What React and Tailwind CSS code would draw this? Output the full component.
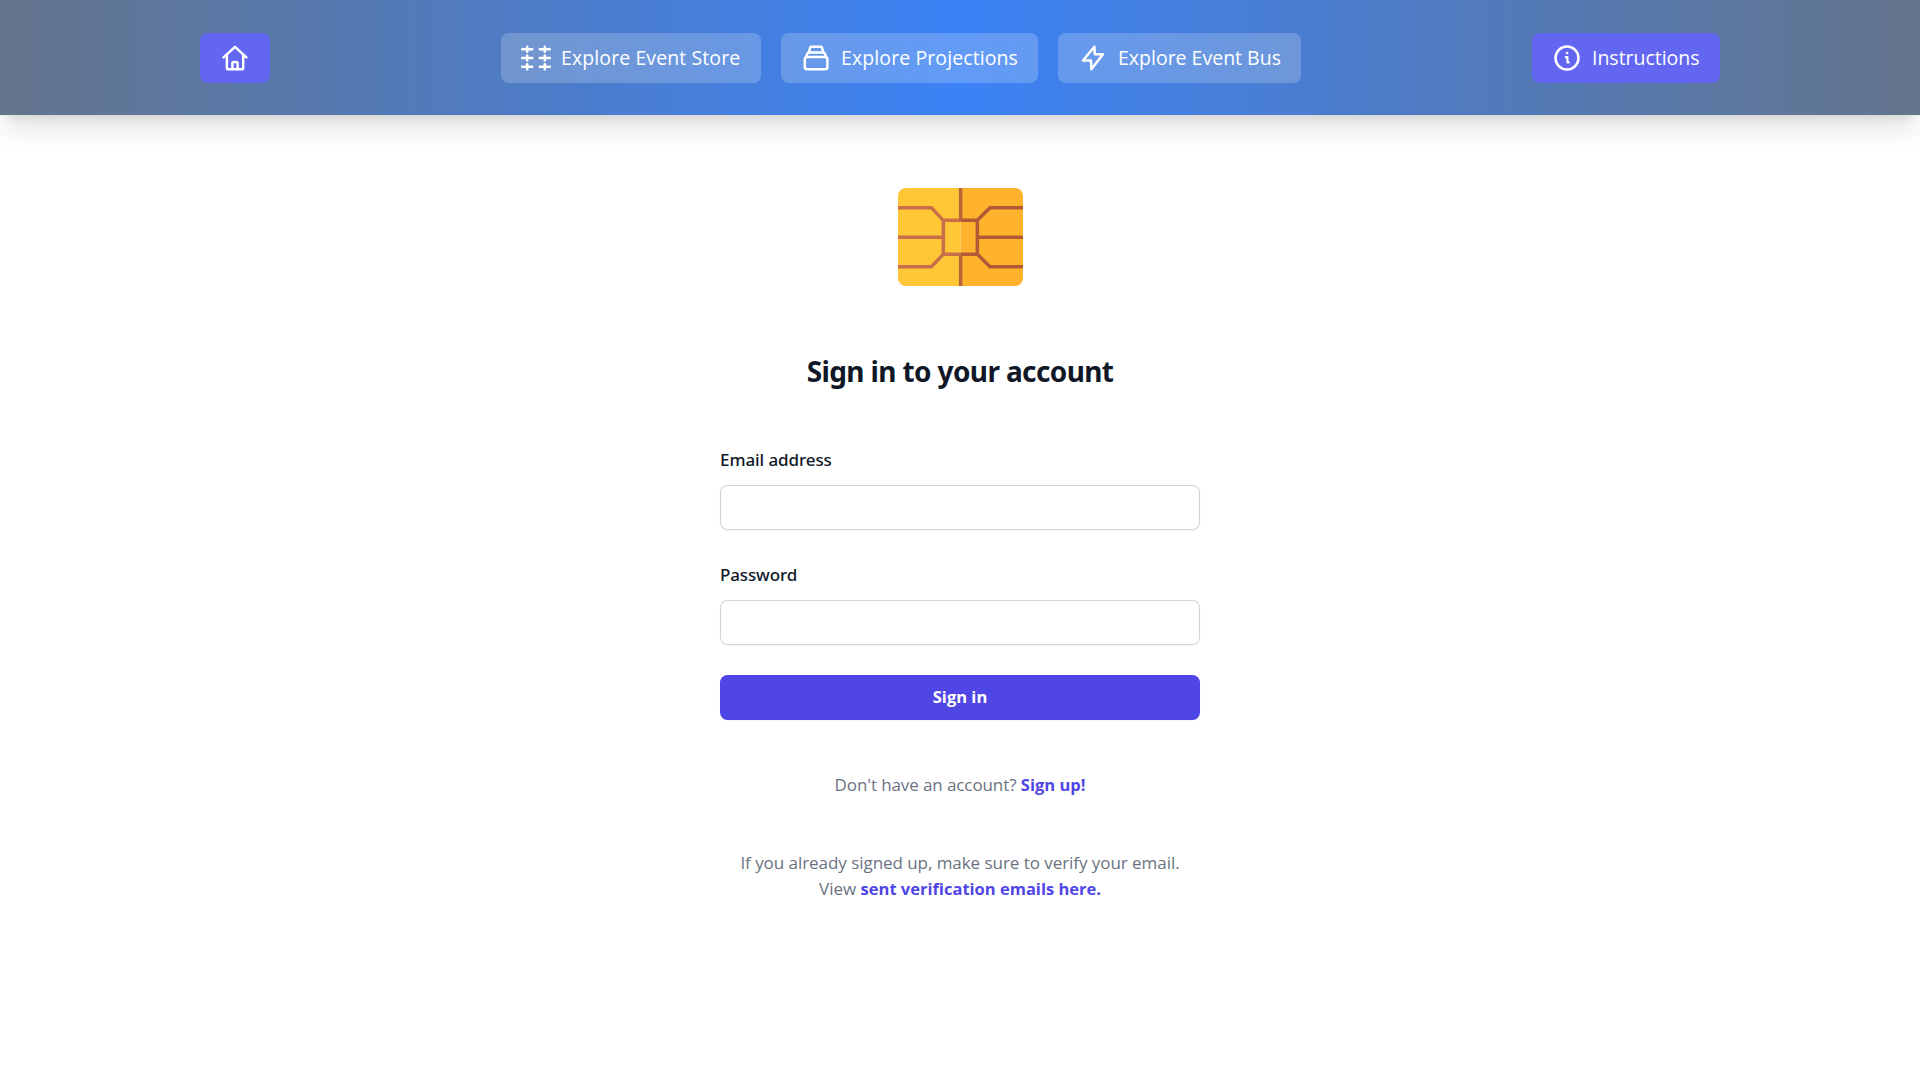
function Icon({ children }) {
  return (
    <svg viewBox="0 0 30 30" className="size-[30px] shrink-0" fill="none" stroke="currentColor" strokeWidth="2.5" strokeLinecap="round" strokeLinejoin="round">
      {children}
    </svg>
  );
}

function HomeIcon() {
  return (
    <Icon>
      <path d="M3.6 14.4 15 3.8l11.4 10.6M6.9 12v12.7c0 .9.6 1.6 1.5 1.6h13.2c.9 0 1.6-.7 1.6-1.6V12" />
      <path d="M12.4 26v-5.8c0-.8.5-1.3 1.3-1.3h2.6c.8 0 1.3.5 1.3 1.3V26" />
    </Icon>
  );
}

function StoreIcon() {
  return (
    <Icon>
      <path d="M1.2 6.3h10M1.2 15h10M1.2 23.7h10M18.8 6.3h10M18.8 15h10M18.8 23.7h10" />
      <path d="M6.2 3.8v5M6.2 12.5v5M6.2 21.2v5M23.8 3.8v5M23.8 12.5v5M23.8 21.2v5" />
    </Icon>
  );
}

function StackIcon() {
  return (
    <Icon>
      <rect x="3.8" y="13.9" width="22.6" height="12.4" rx="2.3" />
      <path d="M5.2 14 6.3 10.7c.2-.9.7-1.3 1.5-1.3h14.6c.8 0 1.3.4 1.5 1.3l1.1 3.3" />
      <path d="M8.1 9.3 9 4.9c.2-.8.6-1.1 1.3-1.1h9.5c.7 0 1.1.3 1.3 1.1l1 4.4" />
    </Icon>
  );
}

function BoltIcon() {
  return (
    <Icon>
      <path d="M16.4 3.8 5 17.5h8l.4 8.8L25 11.3h-8.2z" />
    </Icon>
  );
}

function InfoIcon() {
  return (
    <Icon>
      <circle cx="15" cy="15" r="11.5" />
      <path d="M13.7 14.100h1.700v5.200h1.400" strokeWidth="2.2" />
      <circle cx="15.100" cy="10" r="1.300" fill="currentColor" stroke="none" />
    </Icon>
  );
}

function NavButton({ icon, label, className }) {
  return (
    <a href="#" className={"flex h-[50px] items-center gap-2.5 rounded-[7.5px] px-5 text-[19.5px] whitespace-nowrap text-white " + className}>
      {icon}
      {label && <span>{label}</span>}
    </a>
  );
}

function ChipLogo() {
  return (
    <svg viewBox="54 55 375 294" className="h-[98px] w-[125px] rounded-[8px]" fill="none" strokeWidth="10.5">
      <path d="M54 55h188v294H54z" fill="#ffc636" />
      <path d="M242 55h187v294H242z" fill="#ffb32c" />
      <path d="M54 114h100l36 38h52M190 152v102h52M54 202.500h136M54 291h100l36-37" stroke="#c86f4a" />
      <path d="M429 114H330l-38 38h-50M292 152v102h-50M429 202.500H292M429 291H330l-38-37" stroke="#b25a36" />
      <path d="M242 55v97M242 254v95" stroke="#ba6539" />
    </svg>
  );
}

function Field({ id, label, type, className }) {
  return (
    <div>
      <label htmlFor={id} className={"block h-[30px] font-['Noto_Sans'] text-[17px] leading-[29px] font-medium text-gray-900 " + className}>
        {label}
      </label>
      <input id={id} type={type} className="mt-2.5 block h-[45px] w-full rounded-[7.5px] bg-white px-3 shadow-xs ring-1 ring-[#d1d5db] ring-inset outline-none" />
    </div>
  );
}

export default function App() {
  return (
    <div className="min-h-screen bg-white font-['Open_Sans',sans-serif] text-[17px]">
      <header className="h-[115px] bg-[linear-gradient(to_right,#64748b,#3b82f6,#64748b)] shadow-xl">
        <div className="mx-auto grid h-full w-[1520px] grid-cols-[301px_1fr_188px] items-center">
          <NavButton icon={<HomeIcon />} className="w-[70px] bg-[#6366f1]" />
          <nav className="flex gap-5">
            <NavButton icon={<StoreIcon />} label="Explore Event Store" className="w-[260px] bg-white/20 tracking-[0.1px]" />
            <NavButton icon={<StackIcon />} label="Explore Projections" className="w-[257px] bg-white/20 tracking-[0.1px]" />
            <NavButton icon={<BoltIcon />} label="Explore Event Bus" className="w-[243px] bg-white/20" />
          </nav>
          <NavButton icon={<InfoIcon />} label="Instructions" className="w-[188px] bg-[#6366f1] tracking-[-0.02px]" />
        </div>
      </header>

      <main className="mx-auto flex w-[480px] flex-col pt-[73px]">
        <div className="flex justify-center">
          <ChipLogo />
        </div>
        <h2 className="mt-[63px] text-center font-['Noto_Sans'] text-[28px] leading-[44px] font-bold tracking-[-0.62px] whitespace-nowrap text-gray-900">
          Sign in to your account
        </h2>
        <form className="mt-[51.500px] flex flex-col gap-[30px]" onSubmit={(e) => e.preventDefault()}>
          <Field id="email" label="Email address" type="email" className="tracking-[-0.08px]" />
          <Field id="password" label="Password" type="password" className="tracking-[-0.13px]" />
          <button type="submit" className="h-[45px] rounded-[7.5px] bg-[#4f46e5] text-[16.500px] leading-[30px] font-bold text-white shadow-xs">
            Sign in
          </button>
        </form>
        <p className="mt-[50px] text-center leading-[30px] text-gray-500">
          <span className="tracking-[-0.1px]">Don't have an account?</span>{" "}
          <a href="#" className="text-[16.500px] font-bold text-[#4f46e5]">Sign up!</a>
        </p>
        <p className="mt-[50px] text-center leading-[26.500px] whitespace-nowrap text-gray-500">
          <span className="tracking-[-0.05px]">If you already signed up, make sure to verify your email.</span>
          <br />
          View{" "}
          <a href="#" className="text-[16.500px] font-bold text-[#4f46e5]">sent verification emails here.</a>
        </p>
      </main>
    </div>
  );
}
